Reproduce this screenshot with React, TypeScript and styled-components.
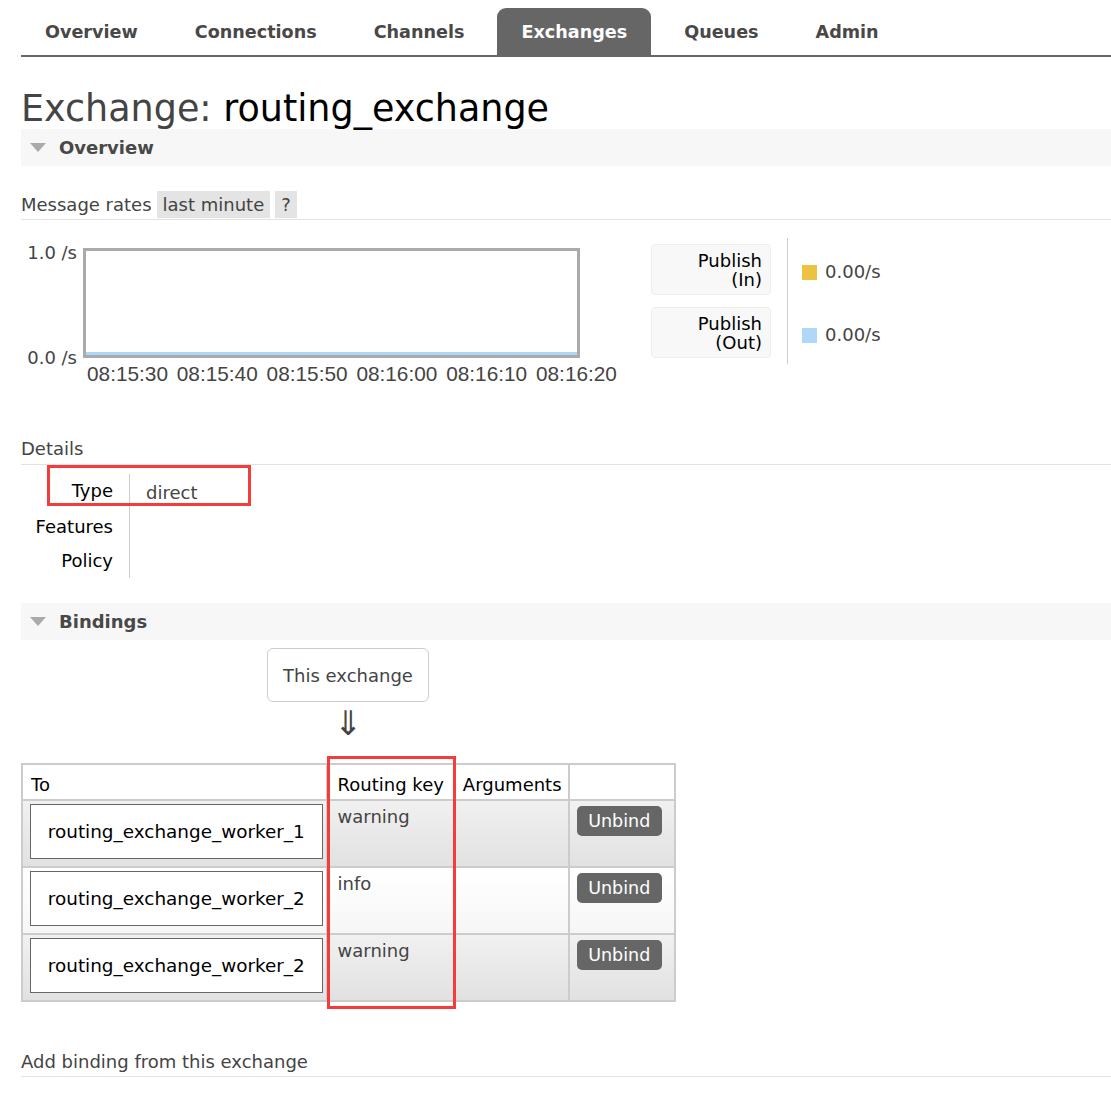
import React from 'react'
import styled, {createGlobalStyle} from 'styled-components'

const GlobalStyle = createGlobalStyle`
  html, body {
    margin: 0;
    padding: 0;
    background: #fff;
  }
  body {
    font-family: "DejaVu Sans", Verdana, sans-serif;
    font-size: 18px;
    color: #484848;
  }
`

const Page = styled.div`
  position: relative;
  padding: 8px 0 40px 21px;
`

const Nav = styled.ul`
  display: flex;
  gap: 9px;
  margin: 0;
  padding: 0;
  list-style: none;
  border-bottom: 2px solid #666;
`

const Tab = styled.li<{active?: boolean}>`
  height: 47px;
  padding: 0 24px;
  display: flex;
  align-items: center;
  font-weight: bold;
  font-size: 17.6px;
  color: ${p => (p.active ? '#fff' : '#484848')};
  background: ${p => (p.active ? '#666' : 'transparent')};
  border-radius: 9px 9px 0 0;
`

const Title = styled.h1`
  margin: 32px 0 0;
  font-weight: normal;
  font-size: 36.5px;
  line-height: 40px;
  color: #444;

  b {
    font-weight: normal;
    color: #000;
  }
`

const SectionHeader = styled.div`
  height: 37px;
  display: flex;
  align-items: center;
  gap: 13px;
  padding-left: 9px;
  background: #f7f7f7;
  font-weight: bold;
  font-size: 18px;
  color: #484848;
`

const Triangle = styled.span`
  width: 0;
  height: 0;
  border-left: 8px solid transparent;
  border-right: 8px solid transparent;
  border-top: 9px solid #aaa;
`

const RatesBlock = styled.div`
  margin-top: 24px;
`

const SubHeading = styled.div`
  display: flex;
  align-items: center;
  gap: 5px;
  height: 29px;
  border-bottom: 1px solid #e2e2e2;
  color: #444;
`

const Pill = styled.span`
  background: #e4e4e4;
  padding: 0 6px;
  line-height: 27px;
`

const ChartRow = styled.div`
  display: flex;
  margin-top: 18px;
  height: 160px;
`

const Chart = styled.div`
  position: relative;
  width: 610px;
  height: 150px;
`

const YLabel = styled.span<{top: number}>`
  position: absolute;
  right: calc(100% - 56px);
  top: ${p => p.top}px;
  color: #444;
  white-space: nowrap;
`

const Plot = styled.div`
  position: absolute;
  left: 62px;
  top: 10px;
  width: 491px;
  height: 104px;
  border: 3px solid #aaa;
  background: #fff;

  &::after {
    content: '';
    position: absolute;
    left: 0;
    right: 0;
    bottom: 0;
    height: 3px;
    background: #afd8f8;
  }
`

const XLabels = styled.div`
  position: absolute;
  left: 66px;
  top: 124px;
  display: flex;
  font-family: "Liberation Sans", Arial, sans-serif;
  font-size: 20.8px;
  line-height: 24px;
  color: #444;
`

const XLabel = styled.span`
  width: 89.8px;
  white-space: nowrap;
`

const Legend = styled.div`
  display: flex;
  margin-left: 20px;
`

const LegendLabels = styled.div`
  display: flex;
  flex-direction: column;
  gap: 12px;
  padding: 6px 16px 0 0;
  border-right: 1px solid #ccc;
  height: 120px;
`

const LegendLabel = styled.div`
  width: 110px;
  height: 49px;
  padding-right: 8px;
  box-sizing: content-box;
  background: #f8f8f8;
  border: 1px solid #eee;
  border-radius: 4px;
  text-align: right;
  line-height: 19px;
  color: #000;
  display: flex;
  flex-direction: column;
  justify-content: center;
`

const LegendValues = styled.div`
  display: flex;
  flex-direction: column;
  padding-left: 14px;
  gap: 39px;
  padding-top: 22px;
`

const LegendValue = styled.div`
  display: flex;
  align-items: center;
  gap: 8px;
  color: #444;
  line-height: 24px;
`

const Swatch = styled.span<{color: string}>`
  width: 15px;
  height: 15px;
  background: ${p => p.color};
`

const DetailsHeading = styled.div`
  margin-top: 40px;
  height: 26px;
  border-bottom: 1px solid #e2e2e2;
  color: #444;
  line-height: 22px;
`

const Facts = styled.div`
  display: grid;
  grid-template-columns: 92px 1px auto;
  column-gap: 16px;
  margin: 9px 0 0;
  width: 300px;
`

const FactLabel = styled.div`
  text-align: right;
  color: #000;
  line-height: 34px;
`

const FactRule = styled.div`
  grid-column: 2;
  grid-row: 1 / span 3;
  background: #ccc;
`

const FactValue = styled.div`
  grid-column: 3;
  color: #444;
  line-height: 34px;
  padding-top: 2px;
`

const BindingsBlock = styled.div`
  margin-top: 25px;
`

const ExchangeBox = styled.div`
  margin: 8px 0 0 246px;
  width: 160px;
  height: 52px;
  border: 1px solid #ccc;
  border-radius: 6px;
  display: flex;
  align-items: center;
  justify-content: center;
  color: #444;
`

const Arrow = styled.div`
  width: 162px;
  margin-left: 246px;
  text-align: center;
  font-size: 34px;
  line-height: 42px;
  color: #444;
`

const Table = styled.table`
  margin-top: 19px;
  border-collapse: collapse;
  border: 2px solid #ccc;
  width: 655px;
`

const Th = styled.th<{w: number; pad?: number}>`
  width: ${p => p.w}px;
  height: 30px;
  padding: 4px 6px 0 ${p => p.pad ?? 8}px;
  text-align: left;
  font-weight: normal;
  color: #000;
  border: 2px solid #ccc;
  background: #fff;
`

const Tr = styled.tr<{alt?: boolean}>`
  background: ${p =>
    p.alt ? 'linear-gradient(#fff, #f6f6f6)' : 'linear-gradient(#f1f1f1, #e1e1e1)'};
`

const Td = styled.td<{pad?: number}>`
  border: 2px solid #ccc;
  padding: 4px 6px 4px ${p => p.pad ?? 7}px;
  vertical-align: top;
  color: #444;
  line-height: 24px;
`

const ToCell = styled.td`
  border: 2px solid #ccc;
  padding: 3px 3px 7px 7px;
`

const QueueBox = styled.div`
  height: 53px;
  border: 1px solid #666;
  background: #fff;
  display: flex;
  align-items: center;
  justify-content: center;
  font-size: 18.4px;
  color: #000;
`

const UnbindButton = styled.button`
  width: 85px;
  height: 30px;
  border: none;
  border-radius: 5px;
  background: #666;
  color: #fff;
  font-family: "DejaVu Sans", Verdana, sans-serif;
  font-size: 17.5px;
  padding: 0;
  margin-top: 1px;
`

const AddBindingHeading = styled.div`
  margin-top: 49px;
  height: 25px;
  border-bottom: 1px solid #e2e2e2;
  color: #444;
  line-height: 22px;
`

const Highlight = styled.div<{x: number; y: number; w: number; h: number}>`
  position: absolute;
  left: ${p => p.x}px;
  top: ${p => p.y}px;
  width: ${p => p.w}px;
  height: ${p => p.h}px;
  border: 3px solid #f43c3c;
  box-sizing: border-box;
  pointer-events: none;
`

const tabs = ['Overview', 'Connections', 'Channels', 'Exchanges', 'Queues', 'Admin']
const times = ['08:15:30', '08:15:40', '08:15:50', '08:16:00', '08:16:10', '08:16:20']
const bindings = [
  {to: 'routing_exchange_worker_1', key: 'warning'},
  {to: 'routing_exchange_worker_2', key: 'info'},
  {to: 'routing_exchange_worker_2', key: 'warning'},
]

export default function App() {
  return (
    <Page>
      <GlobalStyle />
      <Nav>
        {tabs.map(t => (
          <Tab key={t} active={t === 'Exchanges'}>
            {t}
          </Tab>
        ))}
      </Nav>

      <Title>
        Exchange: <b>routing_exchange</b>
      </Title>

      <SectionHeader>
        <Triangle />
        Overview
      </SectionHeader>

      <RatesBlock>
        <SubHeading>
          Message rates <Pill>last minute</Pill> <Pill>?</Pill>
        </SubHeading>
      </RatesBlock>

      <ChartRow>
        <Chart>
          <YLabel top={4}>1.0 /s</YLabel>
          <YLabel top={109}>0.0 /s</YLabel>
          <Plot />
          <XLabels>
            {times.map(t => (
              <XLabel key={t}>{t}</XLabel>
            ))}
          </XLabels>
        </Chart>
        <Legend>
          <LegendLabels>
            <LegendLabel>
              <span>Publish</span>
              <span>(In)</span>
            </LegendLabel>
            <LegendLabel>
              <span>Publish</span>
              <span>(Out)</span>
            </LegendLabel>
          </LegendLabels>
          <LegendValues>
            <LegendValue>
              <Swatch color="#edc240" />
              0.00/s
            </LegendValue>
            <LegendValue>
              <Swatch color="#afd8f8" />
              0.00/s
            </LegendValue>
          </LegendValues>
        </Legend>
      </ChartRow>

      <DetailsHeading>Details</DetailsHeading>
      <Facts>
        <FactLabel>Type</FactLabel>
        <FactRule />
        <FactValue>direct</FactValue>
        <FactLabel>Features</FactLabel>
        <FactValue />
        <FactLabel>Policy</FactLabel>
        <FactValue />
      </Facts>

      <BindingsBlock>
        <SectionHeader>
          <Triangle />
          Bindings
        </SectionHeader>
        <ExchangeBox>This exchange</ExchangeBox>
        <Arrow>⇓</Arrow>
        <Table>
          <thead>
            <tr>
              <Th w={288}>To</Th>
              <Th w={110} pad={10}>Routing key</Th>
              <Th w={94} pad={7}>Arguments</Th>
              <Th w={91} pad={7} />
            </tr>
          </thead>
          <tbody>
            {bindings.map((b, i) => (
              <Tr key={i} alt={i % 2 === 1}>
                <ToCell>
                  <QueueBox>{b.to}</QueueBox>
                </ToCell>
                <Td pad={10}>{b.key}</Td>
                <Td />
                <Td>
                  <UnbindButton>Unbind</UnbindButton>
                </Td>
              </Tr>
            ))}
          </tbody>
        </Table>
      </BindingsBlock>

      <AddBindingHeading>Add binding from this exchange</AddBindingHeading>

      <Highlight x={47} y={465} w={204} h={41} />
      <Highlight x={327} y={756} w={129} h={253} />
    </Page>
  )
}
